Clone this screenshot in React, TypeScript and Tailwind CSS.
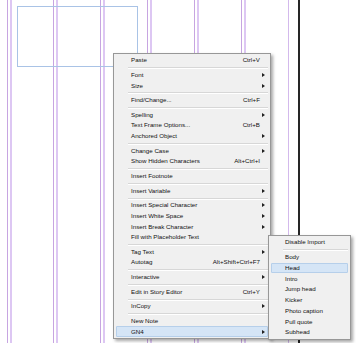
import React from "react";

type Item =
  | { kind: "sep" }
  | { kind: "item"; label: string; shortcut?: string; sub?: boolean; active?: boolean };

const mainItems: Item[] = [
  { kind: "item", label: "Paste", shortcut: "Ctrl+V" },
  { kind: "sep" },
  { kind: "item", label: "Font", sub: true },
  { kind: "item", label: "Size", sub: true },
  { kind: "sep" },
  { kind: "item", label: "Find/Change...", shortcut: "Ctrl+F" },
  { kind: "sep" },
  { kind: "item", label: "Spelling", sub: true },
  { kind: "item", label: "Text Frame Options...", shortcut: "Ctrl+B" },
  { kind: "item", label: "Anchored Object", sub: true },
  { kind: "sep" },
  { kind: "item", label: "Change Case", sub: true },
  { kind: "item", label: "Show Hidden Characters", shortcut: "Alt+Ctrl+I" },
  { kind: "sep" },
  { kind: "item", label: "Insert Footnote" },
  { kind: "sep" },
  { kind: "item", label: "Insert Variable", sub: true },
  { kind: "sep" },
  { kind: "item", label: "Insert Special Character", sub: true },
  { kind: "item", label: "Insert White Space", sub: true },
  { kind: "item", label: "Insert Break Character", sub: true },
  { kind: "item", label: "Fill with Placeholder Text" },
  { kind: "sep" },
  { kind: "item", label: "Tag Text", sub: true },
  { kind: "item", label: "Autotag", shortcut: "Alt+Shift+Ctrl+F7" },
  { kind: "sep" },
  { kind: "item", label: "Interactive", sub: true },
  { kind: "sep" },
  { kind: "item", label: "Edit in Story Editor", shortcut: "Ctrl+Y" },
  { kind: "sep" },
  { kind: "item", label: "InCopy", sub: true },
  { kind: "sep" },
  { kind: "item", label: "New Note" },
  { kind: "item", label: "GN4", sub: true, active: true },
];

const subItems: Item[] = [
  { kind: "item", label: "Disable Import" },
  { kind: "sep" },
  { kind: "item", label: "Body" },
  { kind: "item", label: "Head", active: true },
  { kind: "item", label: "Intro" },
  { kind: "item", label: "Jump head" },
  { kind: "item", label: "Kicker" },
  { kind: "item", label: "Photo caption" },
  { kind: "item", label: "Pull quote" },
  { kind: "item", label: "Subhead" },
];

const guides = [
  "left-[7px] w-[1px] bg-[#c7a5e1]",
  "left-[10px] w-[2px] bg-[#ddc7f3]",
  "left-[53px] w-[1px] bg-[#c7a5e1]",
  "left-[56px] w-[2px] bg-[#ddc7f3]",
  "left-[100px] w-[1px] bg-[#c7a5e1]",
  "left-[103px] w-[2px] bg-[#ddc7f3]",
  "left-[147px] w-[1px] bg-[#c7a5e1]",
  "left-[150px] w-[2px] bg-[#ddc7f3]",
  "left-[194px] w-[1px] bg-[#c7a5e1]",
  "left-[197px] w-[2px] bg-[#ddc7f3]",
  "left-[241px] w-[1px] bg-[#c7a5e1]",
  "left-[244px] w-[2px] bg-[#ddc7f3]",
  "left-[288px] w-[1px] bg-[#d3b9ec]",
  "left-[298px] w-[2px] bg-[#262626]",
];

function Arrow() {
  return (
    <span className="w-[6px] flex justify-end pr-[1px]">
      <span className="block w-0 h-0 border-y-[2.5px] border-y-transparent border-l-[3px] border-l-[#202020]" />
    </span>
  );
}

function MenuList({ items, pad, h }: { items: Item[]; pad: string; h: string }) {
  return (
    <>
      {items.map((it, i) =>
        it.kind === "sep" ? (
          <div key={i} className="h-[4px] ml-[12px] pt-[1.5px]">
            <div className="h-[1px] bg-[#d7d7d7]" />
            <div className="h-[1px] bg-white" />
          </div>
        ) : (
          <div
            key={i}
            className={`flex items-center pr-[2px] ${h} ${pad} ${
              it.active ? "bg-[#d5e5f6] outline outline-1 outline-[#b6cfea] -outline-offset-1 rounded-[1px]" : ""
            }`}
          >
            <span className="flex-1 whitespace-nowrap leading-none">{it.label}</span>
            {it.shortcut && <span className="whitespace-nowrap leading-none">{it.shortcut}</span>}
            {it.sub ? <Arrow /> : <span className="w-[6px]" />}
          </div>
        )
      )}
    </>
  );
}

export default function App() {
  return (
    <div
      className="relative w-[356px] h-[343px] bg-white overflow-hidden text-[6.2px] text-[#111]"
      style={{ fontFamily: '"Liberation Sans", Arial, sans-serif' }}
    >
      {guides.map((g) => (
        <div key={g} className={`absolute top-0 bottom-0 ${g}`} />
      ))}

      {/* text frame */}
      <div className="absolute left-[17px] top-[6px] w-[121px] h-[61px] border border-[#a9c3e6]" />

      {/* context menu */}
      <div className="absolute left-[113px] top-[53px] w-[158px] border border-[#979797] bg-[#f0f0f0] py-[1px] px-[2px] shadow-[2px_2px_3px_rgba(0,0,0,0.35)]">
        <MenuList items={mainItems} pad="pl-[15px]" h="h-[10.65px]" />
      </div>

      {/* GN4 submenu */}
      <div className="absolute left-[268px] top-[235px] w-[83px] border border-[#979797] bg-[#f0f0f0] py-[1px] px-[2px] shadow-[2px_2px_3px_rgba(0,0,0,0.35)]">
        <MenuList items={subItems} pad="pl-[14px]" h="h-[10.75px]" />
      </div>
    </div>
  );
}
